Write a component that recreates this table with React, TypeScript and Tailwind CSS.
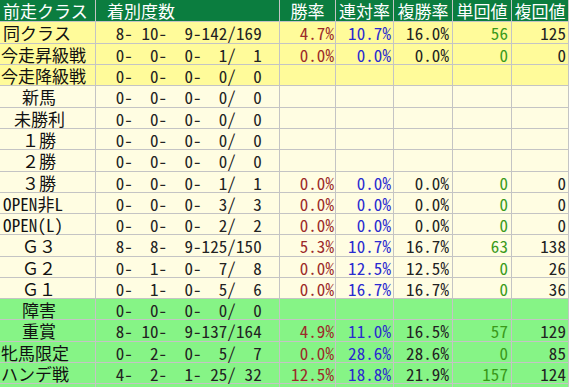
import React from 'react';

const Y = 'bg-[#fffb9a]';
const C = 'bg-[#fffde2]';
const G = 'bg-[#86f486]';

type Row = {
  label: string;
  pl: string;
  bg: string;
  rec: string;
  w?: string;
  r?: string;
  f?: string;
  t?: string;
  h?: string;
};

const rows: Row[] = [
  { label: '同クラス', pl: 'pl-[3px]', bg: Y, rec: ' 8- 10-  9-142/169', w: '4.7%', r: '10.7%', f: '16.0%', t: '56', h: '125' },
  { label: '今走昇級戦', pl: 'pl-[1px]', bg: Y, rec: ' 0-  0-  0-  1/  1', w: '0.0%', r: '0.0%', f: '0.0%', t: '0', h: '0' },
  { label: '今走降級戦', pl: 'pl-[1px]', bg: Y, rec: ' 0-  0-  0-  0/  0' },
  { label: '新馬', pl: 'pl-[22px]', bg: C, rec: ' 0-  0-  0-  0/  0' },
  { label: '未勝利', pl: 'pl-[14px]', bg: C, rec: ' 0-  0-  0-  0/  0' },
  { label: '１勝', pl: 'pl-[22px]', bg: C, rec: ' 0-  0-  0-  0/  0' },
  { label: '２勝', pl: 'pl-[22px]', bg: C, rec: ' 0-  0-  0-  0/  0' },
  { label: '３勝', pl: 'pl-[22px]', bg: C, rec: ' 0-  0-  0-  1/  1', w: '0.0%', r: '0.0%', f: '0.0%', t: '0', h: '0' },
  { label: 'OPEN非L', pl: 'pl-[3px]', bg: C, rec: ' 0-  0-  0-  3/  3', w: '0.0%', r: '0.0%', f: '0.0%', t: '0', h: '0' },
  { label: 'OPEN(L)', pl: 'pl-[3px]', bg: C, rec: ' 0-  0-  0-  2/  2', w: '0.0%', r: '0.0%', f: '0.0%', t: '0', h: '0' },
  { label: 'Ｇ３', pl: 'pl-[22px]', bg: C, rec: ' 8-  8-  9-125/150', w: '5.3%', r: '10.7%', f: '16.7%', t: '63', h: '138' },
  { label: 'Ｇ２', pl: 'pl-[22px]', bg: C, rec: ' 0-  1-  0-  7/  8', w: '0.0%', r: '12.5%', f: '12.5%', t: '0', h: '26' },
  { label: 'Ｇ１', pl: 'pl-[22px]', bg: C, rec: ' 0-  1-  0-  5/  6', w: '0.0%', r: '16.7%', f: '16.7%', t: '0', h: '36' },
  { label: '障害', pl: 'pl-[22px]', bg: G, rec: ' 0-  0-  0-  0/  0' },
  { label: '重賞', pl: 'pl-[22px]', bg: G, rec: ' 8- 10-  9-137/164', w: '4.9%', r: '11.0%', f: '16.5%', t: '57', h: '129' },
  { label: '牝馬限定', pl: 'pl-[1px]', bg: G, rec: ' 0-  2-  0-  5/  7', w: '0.0%', r: '28.6%', f: '28.6%', t: '0', h: '85' },
  { label: 'ハンデ戦', pl: 'pl-[1px]', bg: G, rec: ' 4-  2-  1- 25/ 32', w: '12.5%', r: '18.8%', f: '21.9%', t: '157', h: '124' },
];

function T({ s }: { s: string }) {
  return (
    <>
      {Array.from(s).map((ch, i) =>
        ch.charCodeAt(0) < 128 ? (
          <span key={i} className="inline-block w-[8.6px] text-center [font-feature-settings:'hwid']">
            {ch === ' ' ? '\u00a0' : ch}
          </span>
        ) : (
          <span key={i}>{ch}</span>
        )
      )}
    </>
  );
}

const headers = ['勝率', '連対率', '複勝率', '単回値', '複回値'];

export default function App() {
  return (
    <div className="w-[573px] h-[387px] overflow-hidden bg-white font-['Noto_Sans_CJK_JP',sans-serif] text-[17px] leading-[20px]">
      <div className="grid w-[569px] grid-cols-[95px_183px_55px_57px_58px_58px_56px] grid-rows-[21px_21px_20px_20px_21px_20px_20px_21px_20px_20px_20px_21px_20px_20px_20px_21px_20px_20px_20px] gap-px bg-[#c4c4c4] pr-px">
        <div className="flex items-center bg-[#0b7d3f] pl-[3px] text-white whitespace-nowrap">前走クラス</div>
        <div className="flex items-center bg-[#0b7d3f] pl-[11px] text-white whitespace-nowrap">着別度数</div>
        {headers.map((h) => (
          <div key={h} className="flex items-center justify-center bg-[#0b7d3f] text-white whitespace-nowrap">
            {h}
          </div>
        ))}
        {rows.map((row) => (
          <React.Fragment key={row.label}>
            <div className={`flex items-center whitespace-nowrap pt-px text-[#111] ${row.bg} ${row.pl}`}>
              <T s={row.label} />
            </div>
            <div className={`flex items-center whitespace-nowrap pl-[11px] pt-px text-[#222] ${row.bg}`}>
              <T s={row.rec} />
            </div>
            <div className={`flex items-center justify-end whitespace-nowrap pr-[1px] pt-px text-[#9c2a2a] ${row.bg}`}>
              {row.w && <T s={row.w} />}
            </div>
            <div className={`flex items-center justify-end whitespace-nowrap pr-[2px] pt-px text-[#2a2ad0] ${row.bg}`}>
              {row.r && <T s={row.r} />}
            </div>
            <div className={`flex items-center justify-end whitespace-nowrap pr-[3px] pt-px text-[#222] ${row.bg}`}>
              {row.f && <T s={row.f} />}
            </div>
            <div className={`flex items-center justify-end whitespace-nowrap pr-[3px] pt-px text-[#3a9a1a] ${row.bg}`}>
              {row.t && <T s={row.t} />}
            </div>
            <div className={`flex items-center justify-end whitespace-nowrap pr-[2px] pt-px text-[#222] ${row.bg}`}>
              {row.h && <T s={row.h} />}
            </div>
          </React.Fragment>
        ))}
        <div className={G} />
        <div className={G} />
        <div className={G} />
        <div className={G} />
        <div className={G} />
        <div className={G} />
        <div className={G} />
      </div>
    </div>
  );
}
